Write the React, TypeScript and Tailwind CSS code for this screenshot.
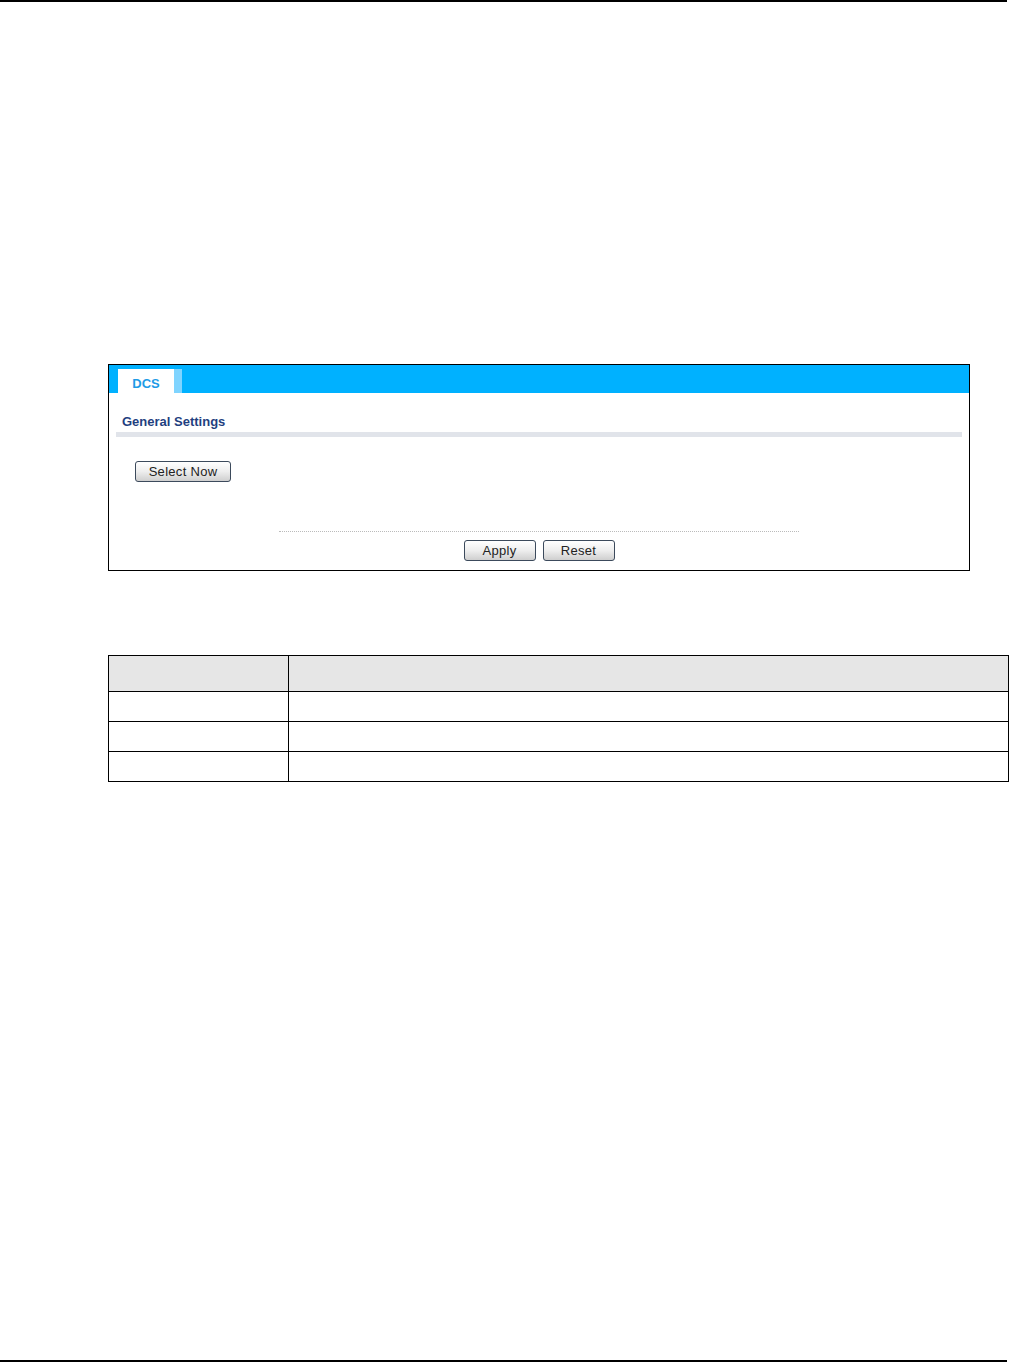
const font = { fontFamily: '"Liberation Sans", "DejaVu Sans", sans-serif' }

function Btn({ label, className }: { label: string; className: string }) {
  return (
    <button
      className={`h-[21px] rounded-[3px] border border-[#3c4a5c] bg-gradient-to-b from-[#ffffff] via-[#eeeeee] to-[#cfcfcf] text-[13px] leading-none tracking-[0.3px] text-[#222] ${className}`}
    >
      {label}
    </button>
  )
}

export default function App() {
  return (
    <div className="flex h-[1363px] w-[1009px] flex-col bg-white" style={font}>
      <div className="h-[2px] w-[1007px] bg-black" />
      <div className="flex flex-1 flex-col pl-[108px] pt-[362px]">
        {/* DCS panel */}
        <div className="flex h-[207px] w-[862px] flex-col border border-black">
          <div className="flex h-[28px] items-end bg-[#00b1ff] pl-[9px]">
            <div className="flex h-[24px] w-[56px] items-center justify-center bg-white pt-[6px] text-[13px] font-bold text-[#1e9be6]">
              DCS
            </div>
            <div className="h-[24px] w-[8px] bg-[#7fd4ff]" />
          </div>
          <div className="px-[7px] pt-[19px]">
            <div className="pl-[6px] text-[13px] font-bold text-[#1f3f7f]">General Settings</div>
            <div className="h-[5px] w-[846px] bg-[#e1e4ea]" />
          </div>
          <div className="pl-[26px] pt-[22px]">
            <Btn label="Select Now" className="w-[96px]" />
          </div>
          <div className="mx-auto mt-[48px] w-[520px] border-t border-dotted border-[#bbbbbb]" />
          <div className="flex justify-center gap-[7px] pt-[8px]">
            <Btn label="Apply" className="w-[72px]" />
            <Btn label="Reset" className="w-[72px]" />
          </div>
        </div>

        {/* table */}
        <table className="mt-[84px] w-[901px] border-collapse border border-black">
          <tbody>
            <tr className="h-[36px] bg-[#e6e6e6]">
              <td className="w-[180px] border border-black" />
              <td className="border border-black" />
            </tr>
            {[0, 1, 2].map((i) => (
              <tr key={i} className="h-[30px]">
                <td className="border border-black" />
                <td className="border border-black" />
              </tr>
            ))}
          </tbody>
        </table>
      </div>
      <div className="mb-[1px] h-[2px] w-[1007px] bg-black" />
    </div>
  )
}
